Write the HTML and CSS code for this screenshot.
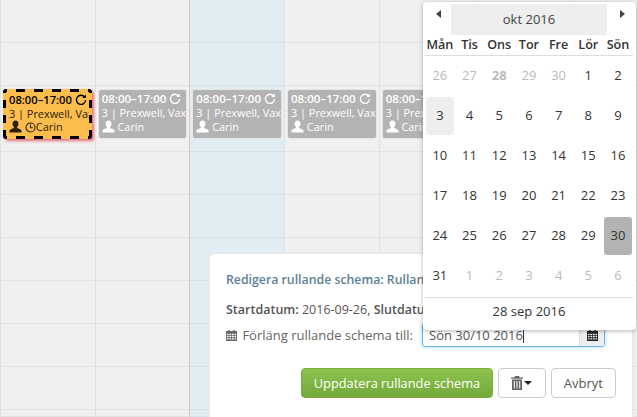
FILE: index.html
```html
<!DOCTYPE html>
<html lang="sv">
<head>
<meta charset="utf-8">
<title>Rullande schema</title>
<link rel="stylesheet" href="styles.css">
</head>
<body>
<svg class="defs" width="0" height="0" aria-hidden="true">
  <symbol id="i-refresh" viewBox="0 0 12 12"><path d="M9.7 3.1A4.6 4.6 0 1 0 10.6 6" fill="none" stroke="currentColor" stroke-width="1.3"/><path d="M7.3 3.9h3.6V.4z" fill="currentColor"/></symbol>
  <symbol id="i-user" viewBox="0 0 14 14"><path d="M7 .5c2 0 3.2 1.500 3.200 3.500 0 1.500-.7 2.900-1.500 3.600v1.100c1.500.6 4.300 1.300 4.800 2.700v2H.5v-2c.5-1.400 3.300-2.100 4.800-2.700V7.600C4.500 6.900 3.800 5.500 3.800 4 3.800 2 5 .5 7 .5z" fill="currentColor"/></symbol>
  <symbol id="i-clock" viewBox="0 0 12 12"><circle cx="6" cy="6" r="4.900" fill="none" stroke="currentColor" stroke-width="1.200"/><path d="M6 2.800V6.400H8.600" fill="none" stroke="currentColor" stroke-width="1.100"/></symbol>
  <symbol id="i-cal" viewBox="0 0 12 12"><path fill-rule="evenodd" d="M2.500 0h1.500v1.200h4V0h1.500v1.200H12V12H0V1.200h2.500zM1 4.200v1.400h1.800V4.200zm2.700 0v1.400h2V4.200zm2.800 0v1.400h2V4.200zm2.800 0v1.400H11V4.200zM1 6.500v1.500h1.800V6.500zm2.700 0v1.500h2V6.500zm2.800 0v1.500h2V6.500zm2.800 0v1.500H11V6.500zM1 8.900v1.500h1.800V8.900zm2.700 0v1.500h2V8.900zm2.800 0v1.500h2V8.900zm2.800 0v1.500H11V8.900z" fill="currentColor"/></symbol>
  <symbol id="i-trash" viewBox="0 0 12 14"><path fill-rule="evenodd" d="M4 0h4l.8 1.500H12v1.300H0V1.500h3.200zM1 3.600h10V14H1zm1.800 1.500v7.400h1V5.100zm2.700 0v7.400h1V5.100zm2.700 0v7.400h1V5.100z" fill="currentColor"/></symbol>
</svg>

<main class="sheet">
  <div class="c"></div><div class="c"></div><div class="c"></div><div class="c"></div><div class="c"></div><div class="c"></div><div class="c"></div>
  <div class="c"></div><div class="c"></div><div class="c"></div><div class="c"></div><div class="c"></div><div class="c"></div><div class="c"></div>

  <div class="c">
    <article class="shift shift-active">
      <div class="shift-time">08:00–17:00 <svg class="ico-refresh"><use href="#i-refresh"/></svg></div>
      <div class="shift-line">3 | Prexwell, Vaxa</div>
      <div class="shift-line"><svg class="ico-user"><use href="#i-user"/></svg> <svg class="ico-clock"><use href="#i-clock"/></svg>Carin</div>
    </article>
  </div>
  <div class="c">
    <article class="shift">
      <div class="shift-time">08:00–17:00 <svg class="ico-refresh"><use href="#i-refresh"/></svg></div>
      <div class="shift-line">3 | Prexwell, Vaxa</div>
      <div class="shift-line"><svg class="ico-user"><use href="#i-user"/></svg> Carin</div>
    </article>
  </div>
  <div class="c">
    <article class="shift">
      <div class="shift-time">08:00–17:00 <svg class="ico-refresh"><use href="#i-refresh"/></svg></div>
      <div class="shift-line">3 | Prexwell, Vaxa</div>
      <div class="shift-line"><svg class="ico-user"><use href="#i-user"/></svg> Carin</div>
    </article>
  </div>
  <div class="c">
    <article class="shift">
      <div class="shift-time">08:00–17:00 <svg class="ico-refresh"><use href="#i-refresh"/></svg></div>
      <div class="shift-line">3 | Prexwell, Vaxa</div>
      <div class="shift-line"><svg class="ico-user"><use href="#i-user"/></svg> Carin</div>
    </article>
  </div>
  <div class="c">
    <article class="shift">
      <div class="shift-time">08:00–17:00 <svg class="ico-refresh"><use href="#i-refresh"/></svg></div>
      <div class="shift-line">3 | Prexwell, Vaxa</div>
      <div class="shift-line"><svg class="ico-user"><use href="#i-user"/></svg> Carin</div>
    </article>
  </div>
  <div class="c"></div><div class="c"></div>

  <div class="c"></div><div class="c"></div><div class="c"></div><div class="c"></div><div class="c"></div><div class="c"></div><div class="c"></div>
  <div class="c"></div><div class="c"></div><div class="c"></div><div class="c"></div><div class="c"></div><div class="c"></div><div class="c"></div>
  <div class="c"></div><div class="c"></div><div class="c"></div><div class="c"></div><div class="c"></div><div class="c"></div><div class="c"></div>
  <div class="c"></div><div class="c"></div><div class="c"></div><div class="c"></div><div class="c"></div><div class="c"></div><div class="c"></div>
  <div class="c"></div><div class="c"></div><div class="c"></div><div class="c"></div><div class="c"></div><div class="c"></div><div class="c"></div>
  <div class="c"></div><div class="c"></div><div class="c"></div><div class="c"></div><div class="c"></div><div class="c"></div><div class="c"></div>
  <div class="c"></div><div class="c"></div><div class="c"></div><div class="c"></div><div class="c"></div><div class="c"></div><div class="c"></div>
</main>

<section class="panel">
  <h2 class="panel-title">Redigera rullande schema: Rullande Carin</h2>
  <p class="panel-dates"><b>Startdatum:</b> 2016-09-26, <b>Slutdatum:</b> 2016-10-30</p>
  <div class="extend">
    <label class="extend-label"><svg class="ico-cal"><use href="#i-cal"/></svg> Förläng rullande schema till:</label>
    <div class="date-input">
      <div class="date-value">Sön 30/10 2016<span class="caret-bar"></span></div>
      <div class="date-addon"><svg class="ico-cal-dark"><use href="#i-cal"/></svg></div>
    </div>
  </div>
  <div class="actions">
    <button class="btn btn-green">Uppdatera rullande schema</button>
    <button class="btn btn-trash"><svg class="ico-trash"><use href="#i-trash"/></svg><span class="caret"></span></button>
    <button class="btn">Avbryt</button>
  </div>
</section>

<aside class="picker">
  <div class="picker-head">
    <span class="arrow arrow-left"></span>
    <div class="picker-month">okt 2016</div>
    <span class="arrow arrow-right"></span>
  </div>
  <div class="picker-dows">
    <span>Mån</span><span>Tis</span><span>Ons</span><span>Tor</span><span>Fre</span><span>Lör</span><span>Sön</span>
  </div>
  <div class="picker-days">
    <span class="off">26</span><span class="off">27</span><span class="off today">28</span><span class="off">29</span><span class="off">30</span><span>1</span><span>2</span>
    <span class="focus">3</span><span>4</span><span>5</span><span>6</span><span>7</span><span>8</span><span>9</span>
    <span>10</span><span>11</span><span>12</span><span>13</span><span>14</span><span>15</span><span>16</span>
    <span>17</span><span>18</span><span>19</span><span>20</span><span>21</span><span>22</span><span>23</span>
    <span>24</span><span>25</span><span>26</span><span>27</span><span>28</span><span>29</span><span class="selected">30</span>
    <span>31</span><span class="off">1</span><span class="off">2</span><span class="off">3</span><span class="off">4</span><span class="off">5</span><span class="off">6</span>
  </div>
  <div class="picker-foot">28 sep 2016</div>
</aside>
</body>
</html>
```
FILE: styles.css
```css
* { box-sizing: border-box; }
html, body { margin: 0; height: 100%; }
body {
  width: 637px;
  height: 417px;
  overflow: hidden;
  position: relative;
  background: #eff0f0;
  font-family: "Open Sans", "Liberation Sans", sans-serif;
  color: #555;
}
.defs { position: absolute; }

.sheet {
  display: grid;
  grid-template-columns: repeat(7, 94.67px);
  grid-template-rows: 43px 43px 66px repeat(6, 43px);
  height: 417px;
  overflow: hidden;
}
.c {
  background: #eff0ef;
  border-left: 1px solid #e1e3e3;
  border-bottom: 1px solid #e1e3e3;
  min-width: 0;
}
.c:nth-child(7n+3) {
  background: #e2edf3;
  border-left-color: #f2b9b9;
  border-bottom-color: #d6e2e9;
}
.c:nth-child(n+15):nth-child(-n+21) { padding: 4px 3px 0 3px; }

.shift {
  height: 48px;
  padding: 2px 0 0 3px;
  background: #b3b3b3;
  color: #fff;
  border-radius: 2px;
  box-shadow: 0 0 0 1px #e4e5e5;
  overflow: hidden;
  white-space: nowrap;
  font-size: 10.9px;
  line-height: 13.5px;
}
.shift-time { font-size: 11.5px; font-weight: 600; line-height: 14px; }
.shift-line { overflow: hidden; }
.shift-active {
  height: 50px;
  margin: -1px 0 0 -1px;
  padding: 1px 0 0 3px;
  border: 3px solid transparent;
  border-radius: 3px;
  background-color: #fdbd4d;
  background-origin: border-box;
  background-clip: border-box;
  background-repeat: no-repeat;
  background-image:
    repeating-linear-gradient(90deg, #000 0 4px, transparent 4px 13px, #000 13px 18px),
    repeating-linear-gradient(90deg, #000 0 4px, transparent 4px 13px, #000 13px 18px),
    repeating-linear-gradient(180deg, #000 0 4px, transparent 4px 11px, #000 11px 15px),
    repeating-linear-gradient(180deg, #000 0 4px, transparent 4px 11px, #000 11px 15px);
  background-size: 100% 3px, 100% 3px, 3px 100%, 3px 100%;
  background-position: 0 0, 0 100%, 0 0, 100% 0;
  color: #2a2208;
  box-shadow: 2px 2px 3px rgba(226, 70, 90, .75);
  line-height: 13px;
}
.shift-active .shift-time { color: #000; line-height: 14px; font-size: 11.2px; }
.ico-refresh { width: 12px; height: 12px; vertical-align: -2px; }
.ico-user { width: 13px; height: 13px; vertical-align: -2px; }
.ico-clock { width: 11px; height: 11px; vertical-align: -2px; }

.panel {
  position: absolute;
  left: 210px;
  top: 254px;
  width: 422px;
  height: 163px;
  padding: 18px 16px 0;
  background: #fff;
  border-radius: 5px 5px 0 0;
  box-shadow: 0 0 0 2px #e4eaee;
  font-size: 12.5px;
}
.panel-title {
  margin: 0;
  font-size: 12.3px;
  line-height: 15px;
  font-weight: 600;
  color: #5d7f96;
  white-space: nowrap;
}
.panel-dates {
  margin: 15px 0 0;
  line-height: 15px;
  white-space: nowrap;
}
.panel-dates b { font-weight: 600; }
.extend {
  display: flex;
  align-items: flex-end;
  margin-top: 6px;
}
.extend-label { flex: none; width: 196px; padding-bottom: 3px; font-size: 13px; line-height: 17px; white-space: nowrap; color: #666; }
.ico-cal { width: 11px; height: 11px; vertical-align: -1px; color: #666; margin-right: 2px; }
.date-input {
  display: flex;
  width: 183px;
  height: 24px;
  border: 1px solid #62b3e8;
  border-radius: 3px;
  box-shadow: 0 0 4px rgba(98, 179, 232, .5);
  background: #fff;
}
.date-value { flex: 1; padding-left: 6px; font-size: 13px; line-height: 22px; color: #555; }
.caret-bar { display: inline-block; width: 1px; height: 16px; background: #333; vertical-align: -3px; }
.date-addon {
  width: 25px;
  display: flex;
  align-items: center;
  justify-content: center;
  background: #eee;
  border-left: 1px solid #ddd;
}
.ico-cal-dark { width: 11px; height: 11px; color: #222; }

.actions {
  display: flex;
  gap: 5px;
  margin-top: 21px;
  margin-left: 75px;
}
.btn {
  height: 30px;
  padding: 0 12px;
  font: inherit;
  font-size: 13px;
  color: #555;
  background: #fff;
  border: 1px solid #ccc;
  border-radius: 4px;
}
.btn-green {
  width: 192px;
  padding: 0;
  font-size: 12.8px;
  color: #fff;
  background: linear-gradient(#8fc350, #73a93a);
  border-color: #7aae3f;
}
.btn-trash { width: 48px; padding: 0; display: flex; align-items: center; justify-content: center; gap: 1px; }
.ico-trash { width: 12px; height: 14px; color: #666; }
.caret {
  width: 0; height: 0;
  border: 4px solid transparent;
  border-top: 4px solid #222;
  border-bottom: 0;
}

.picker {
  position: absolute;
  left: 423px;
  top: 2px;
  width: 213px;
  height: 328px;
  padding: 2px 3px 0 2px;
  background: #fff;
  border-radius: 4px;
  box-shadow: 0 1px 4px rgba(0, 0, 0, .3);
  font-size: 13px;
  color: #333;
}
.picker-head { display: flex; align-items: flex-start; height: 31px; }
.picker-month {
  width: 156px;
  margin-left: 26px;
  height: 31px;
  background: #eee;
  text-align: center;
  line-height: 31px;
  color: #444;
}
.arrow { width: 0; height: 0; border: 4px solid transparent; margin-top: 6px; }
.arrow-left { position: absolute; left: 13px; border-right: 5px solid #444; border-left: 0; }
.arrow-right { position: absolute; right: 11px; border-left: 5px solid #444; border-right: 0; }
.picker-dows, .picker-days { display: grid; grid-template-columns: repeat(7, 29.7px); text-align: center; }
.picker-dows {
  height: 20px;
  margin-top: 1px;
  font-size: 12.6px;
  font-weight: 600;
  line-height: 17px;
  border-bottom: 1px solid #ddd;
  white-space: nowrap;
}
.picker-days { grid-auto-rows: 40px; line-height: 36px; margin-top: 0; }
.picker-days span { margin: 1px; border-radius: 3px; }
.off { color: #bbb; }
.today { font-weight: 700; }
.focus { background: #eee; }
.selected { background: #b3b3b3; }
.picker-foot {
  margin-top: 1px;
  height: 30px;
  border-top: 1px solid #ddd;
  text-align: center;
  line-height: 27px;
}
```
